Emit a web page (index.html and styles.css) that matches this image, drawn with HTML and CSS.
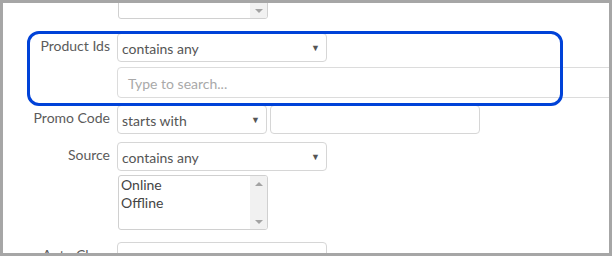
FILE: index.html
```html
<!DOCTYPE html>
<html>
<head>
<meta charset="utf-8">
<link rel="stylesheet" href="styles.css">
</head>
<body>
<div class="frame">
  <div class="form">
    <div class="row row-top">
      <div class="label"></div>
      <div class="controls">
        <div class="listbox listbox-remnant">
          <div class="options"></div>
          <div class="scroll"><span class="up"></span><span class="down"></span></div>
        </div>
      </div>
    </div>

    <div class="row row-product">
      <div class="label">Product Ids</div>
      <div class="controls">
        <div class="select select-wide"><span>contains any</span><span class="arrow">▼</span></div>
        <div class="search">Type to search...</div>
      </div>
    </div>

    <div class="row row-promo">
      <div class="label">Promo Code</div>
      <div class="controls inline">
        <div class="select select-narrow"><span>starts with</span><span class="arrow">▼</span></div>
        <div class="text-input"></div>
      </div>
    </div>

    <div class="row row-source">
      <div class="label">Source</div>
      <div class="controls">
        <div class="select select-wide"><span>contains any</span><span class="arrow">▼</span></div>
        <div class="listbox listbox-source">
          <div class="options">
            <div class="option">Online</div>
            <div class="option">Offline</div>
          </div>
          <div class="scroll"><span class="up"></span><span class="down"></span></div>
        </div>
      </div>
    </div>

    <div class="row row-auto">
      <div class="label">Auto Close</div>
      <div class="controls">
        <div class="select select-wide"><span>Please select</span><span class="arrow">▼</span></div>
      </div>
    </div>
  </div>
  <div class="highlight"></div>
</div>
</body>
</html>
```

FILE: styles.css
```css
html, body {
  margin: 0;
  padding: 0;
  background: #ffffff;
}

.frame {
  position: relative;
  box-sizing: border-box;
  width: 612px;
  height: 256px;
  border: 3px solid #a6a6a6;
  background: #ffffff;
  overflow: hidden;
  font-family: Lato, "Open Sans", sans-serif;
  color: #555555;
}

.form {
  display: flex;
  flex-direction: column;
}

.row {
  display: grid;
  grid-template-columns: 107px auto;
  column-gap: 7px;
  align-items: start;
}

.label {
  font-size: 14px;
  text-align: right;
  padding-top: 5px;
  line-height: 16px;
  color: #5b5b5b;
}

.controls {
  display: flex;
  flex-direction: column;
  align-items: flex-start;
}

.controls.inline {
  flex-direction: row;
  gap: 3px;
}

.row-top { margin-top: -39px; }
.row-product { margin-top: 14px; }
.row-promo { margin-top: 7px; }
.row-source { margin-top: 8px; }
.row-auto { margin-top: 12px; }

.select {
  box-sizing: border-box;
  height: 29px;
  border: 1px solid #d6d6d6;
  border-radius: 4px;
  display: flex;
  align-items: center;
  justify-content: space-between;
  padding: 2px 6px 0 4px;
  font-size: 14px;
  color: #555555;
  background: #ffffff;
}

.select-wide { width: 210px; }
.select-narrow { width: 150px; }

.arrow {
  font-size: 9px;
  color: #555555;
  margin-top: -2px;
}

.search {
  box-sizing: border-box;
  margin-top: 5px;
  width: 540px;
  height: 31px;
  border: 1px solid #dcdcdc;
  border-radius: 4px;
  padding: 8px 0 0 10px;
  font-size: 14px;
  line-height: 16px;
  color: #a9a9a9;
}

.text-input {
  box-sizing: border-box;
  width: 210px;
  height: 29px;
  border: 1px solid #d6d6d6;
  border-radius: 4px;
}

.listbox {
  box-sizing: border-box;
  width: 150px;
  height: 55px;
  border: 1px solid #d0d0d0;
  border-radius: 3px;
  display: flex;
  overflow: hidden;
  margin-left: 1px;
}

.listbox-source { margin-top: 4px; }

.options {
  flex: 1;
  padding: 0 0 0 2px;
}

.option {
  font-size: 14px;
  line-height: 18px;
  color: #444444;
}

.scroll {
  width: 17px;
  background: #f1f1f1;
  display: flex;
  flex-direction: column;
  justify-content: space-between;
  align-items: center;
  padding: 6px 0 5px;
}

.up, .down {
  width: 0;
  height: 0;
  border-left: 4px solid transparent;
  border-right: 4px solid transparent;
}

.up { border-bottom: 4px solid #a3a3a3; }
.down { border-top: 4px solid #a3a3a3; }

.highlight {
  position: absolute;
  left: 24px;
  top: 28px;
  width: 536px;
  height: 75px;
  box-sizing: border-box;
  border: 3px solid #0042d8;
  border-radius: 12px;
  pointer-events: none;
}
```
